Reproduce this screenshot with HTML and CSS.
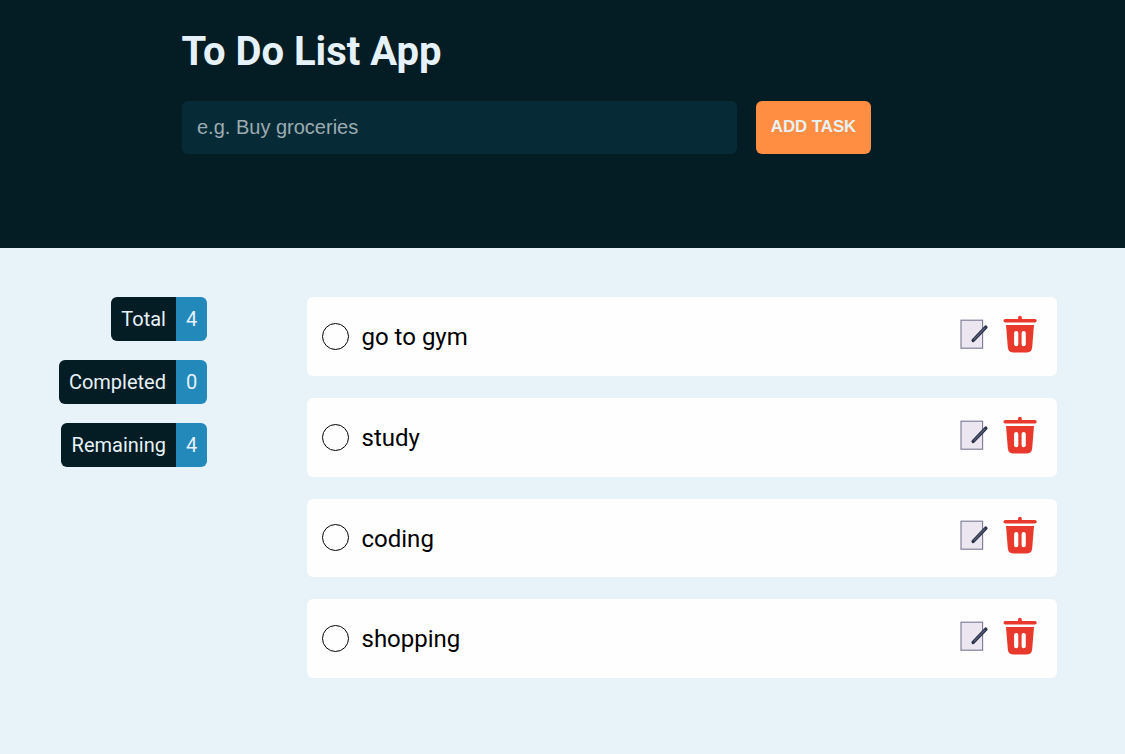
FILE: index.html
```
<!DOCTYPE html>
<html lang="en">
<head>
<meta charset="utf-8">
<title>To Do List App</title>
<link rel="stylesheet" href="styles.css">
</head>
<body>
<svg class="sprite" aria-hidden="true">
  <symbol id="edit" viewBox="0 0 30 32">
    <rect x="2" y="2.2" width="21.6" height="28" fill="#ebe6ef" stroke="#7a7893" stroke-width="1.1"/>
    <path d="M14.2 22.4 26.8 9.2" stroke="#2b3147" stroke-width="3.5" stroke-linecap="round"/>
    <path d="M14.8 21.7 26.1 9.9" stroke="#59647d" stroke-width="1.2"/>
  </symbol>
  <symbol id="trash" viewBox="0 0 34 40">
    <path fill="#e9392c" fill-rule="evenodd" d="M15 4V2.7a1.9 1.9 0 0 1 3.8 0V4H32a1.75 1.75 0 0 1 0 3.5H2.2a1.75 1.75 0 0 1 0-3.5ZM3 10.1H31L29.2 32.2Q28.6 37.4 24 37.4H10Q5.4 37.4 4.8 32.2ZM13.2 15.9a2.1 2.1 0 0 0-2.1 2.1V29.2a2.1 2.1 0 0 0 4.2 0V18a2.1 2.1 0 0 0-2.1-2.1ZM20.7 15.9a2.1 2.1 0 0 0-2.1 2.1V29.2a2.1 2.1 0 0 0 4.2 0V18a2.1 2.1 0 0 0-2.1-2.1Z"/>
  </symbol>
</svg>
<header class="header">
  <h1 class="title">To Do List App</h1>
  <form class="form">
    <input class="input" type="text" placeholder="e.g. Buy groceries">
    <button class="add" type="button">ADD TASK</button>
  </form>
</header>
<main class="main">
  <aside class="stats">
    <div class="stat"><span class="label">Total</span><span class="count">4</span></div>
    <div class="stat"><span class="label">Completed</span><span class="count">0</span></div>
    <div class="stat"><span class="label">Remaining</span><span class="count">4</span></div>
  </aside>
  <ul class="tasks">
    <li class="task"><span class="check"></span><span class="name">go to gym</span><svg class="edit"><use href="#edit"/></svg><svg class="trash"><use href="#trash"/></svg></li>
    <li class="task"><span class="check"></span><span class="name">study</span><svg class="edit"><use href="#edit"/></svg><svg class="trash"><use href="#trash"/></svg></li>
    <li class="task"><span class="check"></span><span class="name">coding</span><svg class="edit"><use href="#edit"/></svg><svg class="trash"><use href="#trash"/></svg></li>
    <li class="task"><span class="check"></span><span class="name">shopping</span><svg class="edit"><use href="#edit"/></svg><svg class="trash"><use href="#trash"/></svg></li>
  </ul>
</main>
</body>
</html>
```
FILE: styles.css
```
* { box-sizing: border-box; margin: 0; padding: 0; }
body { min-height: 754px; background: #e7f3f9; font-family: Roboto, sans-serif; }
.sprite { display: none; }
.header { height: 248px; padding: 28px 0 0 182px; background: #041c23; }
.title { margin-left: -0.5px; color: #e6f2f9; font-size: 40px; font-weight: 700; line-height: 48px; }
.form { display: flex; gap: 19px; margin-top: 25px; }
.input { width: 555px; height: 53px; padding: 0 15px; border: 0; border-radius: 6px; background: #072b36; color: #e6f2f9; font: 20px "Liberation Sans", Arial, sans-serif; }
.input::placeholder { color: #9babb2; opacity: 1; }
.add { width: 115px; height: 53px; padding-bottom: 2px; border: 0; border-radius: 6px; background: #ff8e42; color: #e6f2f9; font: bold 16.8px "Liberation Sans", Arial, sans-serif; white-space: nowrap; }
.main { display: flex; gap: 100px; padding: 49px 68px 0 0; }
.stats { display: flex; flex-direction: column; align-items: flex-end; gap: 19px; width: 207px; }
.stat { display: flex; height: 44px; overflow: hidden; border-radius: 6px; color: #e6f2f9; font-size: 20px; line-height: 44px; }
.label { padding: 0 10px 0 10.2px; background: #041c23; }
.count { width: 31px; background: #2389ba; text-align: center; }
.tasks { display: flex; flex-direction: column; gap: 22px; width: 750px; list-style: none; }
.task { display: flex; align-items: center; height: 78.75px; padding: 0 20px 0 15px; border-radius: 6px; background: #fefefe; }
.check { width: 27px; height: 27px; border: 1px solid #000; border-radius: 50%; }
.name { flex: 1; margin-left: 12.5px; padding-top: 1.3px; color: #000; font-size: 24px; line-height: 30px; }
.edit { width: 30px; height: 32px; margin: 0 14px 5px 0; }
.trash { width: 34px; height: 40px; margin-bottom: 3px; }
```
